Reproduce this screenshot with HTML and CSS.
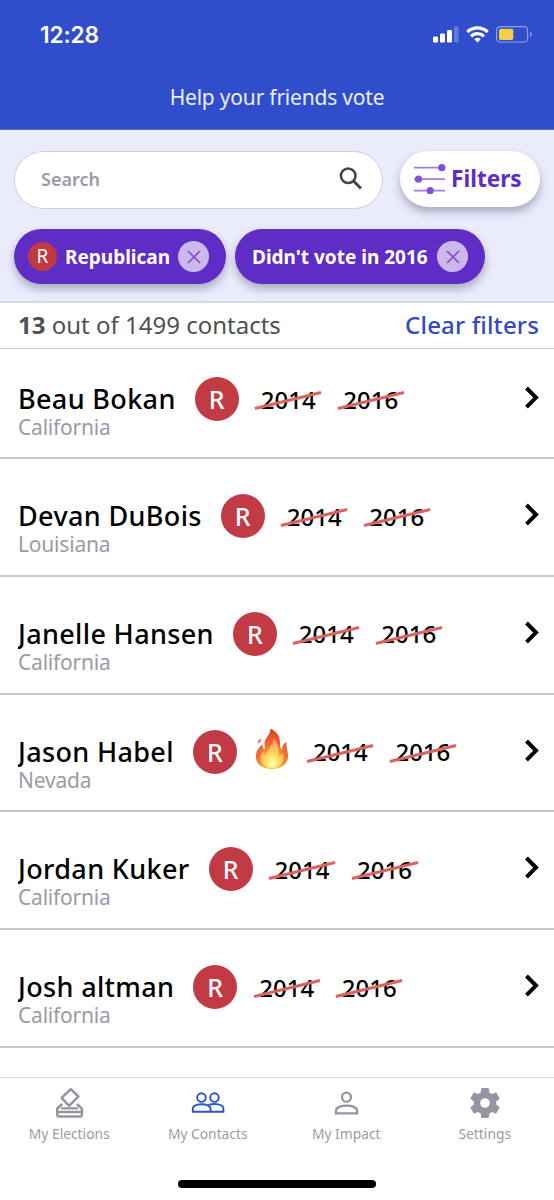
FILE: index.html
```
<!DOCTYPE html>
<html lang="en">
<head>
  <meta charset="UTF-8">
  <meta name="viewport" content="width=device-width, initial-scale=1.0">
  <title>My Contacts</title>
  <link rel="stylesheet" href="styles.css">
</head>
<body>
  <svg class="defs" width="0" height="0">
    <symbol id="chevron" viewBox="0 0 16 24">
      <path d="M2.5 2l9.5 9.6-9.5 9.6" fill="none" stroke="#000" stroke-width="4"/>
    </symbol>
    <symbol id="close" viewBox="0 0 14 14">
      <path d="M1 1l12 12M13 1L1 13" fill="none" stroke="#8450c8" stroke-width="1.7"/>
    </symbol>
  </svg>

  <div class="app">
    <header class="header">
      <div class="status-bar">
        <span class="time">12:28</span>
        <div class="status-icons">
          <svg width="26" height="17" viewBox="0 0 26 17" fill="#fff">
            <rect x="0" y="10.5" width="5" height="6" rx="1.3"/>
            <rect x="7" y="7.5" width="5" height="9" rx="1.3"/>
            <rect x="14" y="4" width="5" height="12.5" rx="1.3"/>
            <rect x="21" y="0.5" width="4.6" height="16" rx="1.3" opacity=".25"/>
          </svg>
          <svg width="23" height="17" viewBox="0 0 23 17" fill="none" stroke="#fff" stroke-width="3.2">
            <path d="M1.300 6a14.600 14.600 0 0 1 20.400 0"/>
            <path d="M5 10.300a9.300 9.300 0 0 1 13 0"/>
            <path d="M11.500 16.600l-3.200-3.400a4.800 4.800 0 0 1 6.400 0z" fill="#fff" stroke="none"/>
          </svg>
          <svg width="37" height="17" viewBox="0 0 37 17">
            <rect x="0.6" y="0.6" width="31" height="15.4" rx="3.6" fill="none" stroke="#8f9fe4" stroke-width="1.2"/>
            <rect x="3" y="2.7" width="14.3" height="11.3" rx="1.8" fill="#f8cd46"/>
            <path d="M34 5.500c2.300 1 2.300 4.600 0 5.600z" fill="#8f9fe4"/>
          </svg>
        </div>
      </div>
      <div class="title">Help your friends vote</div>
    </header>

    <section class="filter-area">
      <div class="search-row">
        <div class="search-box">
          <span>Search</span>
          <svg width="24" height="24" viewBox="0 0 24 24" fill="none" stroke="#444" stroke-width="2.500">
            <circle cx="9.200" cy="8.700" r="7.300"/>
            <path d="M14.300 13.800l7.700 7.700" stroke-width="3"/>
          </svg>
        </div>
        <div class="filters-btn">
          <svg width="36" height="30" viewBox="0 0 36 30">
            <path d="M0 3.700h29M0 15.200h31M0 26.700h31" stroke="#a57fdc" stroke-width="1.700"/>
            <circle cx="27.800" cy="3.700" r="3.600" fill="#8450d0"/>
            <circle cx="4.500" cy="15.200" r="3.600" fill="#8450d0"/>
            <circle cx="16.200" cy="26.700" r="3.600" fill="#8450d0"/>
          </svg>
          <span>Filters</span>
        </div>
      </div>
      <div class="chips">
        <div class="chip">
          <span class="chip-badge">R</span>
          <span>Republican</span>
          <span class="chip-close"><svg width="14" height="14"><use href="#close"/></svg></span>
        </div>
        <div class="chip chip-wide">
          <span>Didn't vote in 2016</span>
          <span class="chip-close"><svg width="14" height="14"><use href="#close"/></svg></span>
        </div>
      </div>
    </section>

    <div class="summary">
      <span><b>13</b> out of 1499 contacts</span>
      <a class="clear">Clear filters</a>
    </div>

    <main class="contacts">
      <div class="contact">
        <div class="contact-line">
          <span class="name">Beau Bokan</span>
          <span class="badge">R</span>
          <span class="year">2014</span>
          <span class="year">2016</span>
          <svg class="arrow" width="16" height="24"><use href="#chevron"/></svg>
        </div>
        <div class="state">California</div>
      </div>
      <div class="contact">
        <div class="contact-line">
          <span class="name">Devan DuBois</span>
          <span class="badge">R</span>
          <span class="year">2014</span>
          <span class="year">2016</span>
          <svg class="arrow" width="16" height="24"><use href="#chevron"/></svg>
        </div>
        <div class="state">Louisiana</div>
      </div>
      <div class="contact">
        <div class="contact-line">
          <span class="name">Janelle Hansen</span>
          <span class="badge">R</span>
          <span class="year">2014</span>
          <span class="year">2016</span>
          <svg class="arrow" width="16" height="24"><use href="#chevron"/></svg>
        </div>
        <div class="state">California</div>
      </div>
      <div class="contact">
        <div class="contact-line">
          <span class="name">Jason Habel</span>
          <span class="badge">R</span>
          <svg class="fire" width="34" height="42" viewBox="0 0 34 42">
            <defs>
              <radialGradient id="flame" cx=".5" cy=".85" r=".75">
                <stop offset="0" stop-color="#fff06a"/>
                <stop offset=".35" stop-color="#ffae3c"/>
                <stop offset=".62" stop-color="#f56a32"/>
                <stop offset="1" stop-color="#e5432b"/>
              </radialGradient>
              <radialGradient id="core" cx=".5" cy=".85" r=".8">
                <stop offset="0" stop-color="#fffdc0"/>
                <stop offset=".35" stop-color="#ffe35c"/>
                <stop offset=".7" stop-color="#fdb963"/>
                <stop offset="1" stop-color="#f99050"/>
              </radialGradient>
            </defs>
            <path d="M15.500 0.500c0 6.500-5.700 9.500-6 14.800-.1 2.300.8 4 .3 6-1.700-.6-2.400-2.600-2.300-5C3.500 19.500 1 23.500 1 28.800 1 36 7.500 41 16.700 41 26.300 41 33 35.800 33 27.500c0-4.300-2-7.800-1.700-13.200-2.800.9-4.100 4.100-4.300 7.200-1.500-1-2.300-2.800-2-5.300C25.500 9.200 22 3.500 15.500.5z" fill="url(#flame)"/>
            <path d="M3.500 15.500c-1.300-1.500-.4-3.800 2.300-5.300.1 1.800 0 4-2.300 5.300z" fill="#ee6a40"/>
            <path d="M18 10c1 7.500-5.500 10-6.500 17-1.700-.5-3-1.800-3.500-3.500-3.500 5.500-3.500 16 8.700 16.500 11.500-.3 12.800-8.500 11-15-1 2-2.200 2.700-4 3C24.500 21.500 23.500 14.500 18 10z" fill="url(#core)"/>
          </svg>
          <span class="year">2014</span>
          <span class="year">2016</span>
          <svg class="arrow" width="16" height="24"><use href="#chevron"/></svg>
        </div>
        <div class="state">Nevada</div>
      </div>
      <div class="contact">
        <div class="contact-line">
          <span class="name">Jordan Kuker</span>
          <span class="badge">R</span>
          <span class="year">2014</span>
          <span class="year">2016</span>
          <svg class="arrow" width="16" height="24"><use href="#chevron"/></svg>
        </div>
        <div class="state">California</div>
      </div>
      <div class="contact">
        <div class="contact-line">
          <span class="name">Josh altman</span>
          <span class="badge">R</span>
          <span class="year">2014</span>
          <span class="year">2016</span>
          <svg class="arrow" width="16" height="24"><use href="#chevron"/></svg>
        </div>
        <div class="state">California</div>
      </div>
    </main>

    <nav class="tabs">
      <div class="tab">
        <svg width="36" height="36" viewBox="0 0 36 36" fill="none" stroke="#9395a0" stroke-width="2.500" stroke-linejoin="round">
          <path d="M19.800 4.200l7.600 7.300-9.300 9.300-7.500-8z"/>
          <path d="M11.200 19l-5 4.700v6.100q0 1.800 1.800 1.800h21.100q1.800 0 1.800-1.800v-6.100l-5-4.700M6.200 27h24.700" stroke-width="2.500"/>
          <path d="M10 23.300h17" stroke-width="2.200"/>
        </svg>
        <span>My Elections</span>
      </div>
      <div class="tab">
        <svg width="36" height="36" viewBox="0 0 36 36" fill="none" stroke="#3150cc" stroke-width="1.900">
          <circle cx="11.500" cy="12.600" r="4.300"/>
          <circle cx="24.500" cy="12.600" r="4.300"/>
          <path d="M2.800 26.800v-3c0-6 17.800-6 17.800 0v3zM17 20.700c4.500-2.800 16.400-2.400 16.400 3.100v3H20.500"/>
        </svg>
        <span>My Contacts</span>
      </div>
      <div class="tab">
        <svg width="36" height="36" viewBox="0 0 36 36" fill="none" stroke="#9395a0" stroke-width="2.300">
          <circle cx="18.500" cy="12.200" r="4.500"/>
          <path d="M8 28.400v-3c0-6.300 21-6.300 21 0v3z"/>
        </svg>
        <span>My Impact</span>
      </div>
      <div class="tab">
        <svg width="36" height="36" viewBox="0 0 24 24" fill="#9395a3">
          <path d="M19.430 12.980c.04-.32.070-.64.070-.98s-.03-.66-.07-.98l2.110-1.650c.19-.15.24-.42.120-.64l-2-3.460c-.12-.22-.39-.3-.61-.22l-2.490 1c-.52-.4-1.080-.73-1.690-.98l-.38-2.650C14.460 2.180 14.250 2 14 2h-4c-.25 0-.46.180-.49.420l-.38 2.650c-.61.25-1.170.59-1.690.98l-2.490-1c-.23-.09-.49 0-.61.220l-2 3.460c-.13.220-.07.490.120.640l2.110 1.650c-.04.320-.07.650-.07.980s.03.660.070.980l-2.110 1.650c-.19.150-.24.420-.12.640l2 3.460c.12.220.39.300.61.220l2.490-1c.52.400 1.080.730 1.690.980l.38 2.650c.03.240.240.420.490.420h4c.25 0 .46-.18.490-.42l.38-2.650c.61-.25 1.170-.59 1.690-.98l2.490 1c.23.090.49 0 .61-.22l2-3.460c.12-.22.070-.49-.12-.64l-2.110-1.650zM12 15.200c-1.770 0-3.200-1.430-3.200-3.200s1.430-3.200 3.200-3.200 3.200 1.430 3.200 3.200-1.430 3.200-3.200 3.200z"/>
        </svg>
        <span>Settings</span>
      </div>
    </nav>
    <div class="home-bar"></div>
  </div>
</body>
</html>
```

FILE: styles.css
```
* { box-sizing: border-box; }
body { margin: 0; font-family: "Noto Sans", "Open Sans", sans-serif; background: #fff; }
.defs { display: block; }
.app { width: 554px; height: 1200px; overflow: hidden; display: flex; flex-direction: column; }
.app > * { flex-shrink: 0; }
svg { display: block; flex-shrink: 0; }
span, a { white-space: nowrap; flex-shrink: 0; }

/* header */
.header { height: 130px; background: #304ecb; color: #fff; border-bottom: 1px solid #5268d0; }
.status-bar { height: 68px; padding: 0 21px 0 40px; display: flex; justify-content: space-between; align-items: center; }
.time { font-family: Inter, sans-serif; font-size: 22.6px; font-weight: 600; letter-spacing: -0.1px; }
.status-icons { display: flex; gap: 7px; }
.title { text-align: center; font-size: 21px; line-height: 59px; letter-spacing: -0.2px; color: #e9efff; }

/* search and filters */
.filter-area { height: 173px; padding: 21px 14px 0; background: #eaebfb; border-bottom: 2px solid #d8d9e3; }
.search-row { display: flex; justify-content: space-between; align-items: flex-start; }
.search-box { width: 369px; height: 58px; padding: 0 19px 2px 26px; display: flex; justify-content: space-between; align-items: center; background: #fff; border: 1px solid #cfcfd6; border-radius: 29px; }
.search-box span { font-size: 18px; font-weight: 600; color: #9a9ba7; }
.filters-btn { width: 140px; height: 56px; padding-left: 14px; display: flex; align-items: center; gap: 1px; background: #fff; border-radius: 28px; box-shadow: 0 5px 9px rgba(50,50,80,0.35); }
.filters-btn span { font-size: 22.6px; line-height: 56px; font-weight: 700; color: #5d2bc5; }
.chips { display: flex; gap: 9px; margin-top: 20px; }
.chip { width: 212px; height: 55px; padding: 0 17px 0 14px; display: flex; align-items: center; justify-content: space-between; background: #5f2dc6; border-radius: 28px; box-shadow: 0 5px 8px rgba(50,50,80,0.35); color: #fff; font-size: 19px; font-weight: 700; }
.chip-wide { width: 250px; padding-left: 17px; }
.chip-badge { width: 29px; height: 29px; border-radius: 50%; background: #c13a42; font-weight: 400; line-height: 29px; text-align: center; }
.chip-close { width: 31px; height: 31px; border-radius: 50%; background: #ccb8ec; display: flex; align-items: center; justify-content: center; }

.summary { height: 46px; padding: 0 15px 3px 18px; display: flex; justify-content: space-between; align-items: center; border-bottom: 1px solid #cfcfcf; color: #505050; font-size: 24px; }
.clear { color: #3349c6; font-weight: 500; letter-spacing: 0.15px; }

/* contact list */
.contacts { height: 728px; overflow: hidden; }
.contact { height: 117.8px; padding: 35px 14px 0 18px; border-bottom: 2px solid #c8c8c8; }
.contact:first-child { height: 110px; padding-top: 28px; }
.contact-line { height: 44px; display: flex; align-items: center; }
.name { font-size: 27px; font-weight: 500; line-height: 32px; letter-spacing: 0.35px; color: #000; clip-path: inset(0 0 -6px 0); }
.badge { width: 44px; height: 44px; margin-left: 19px; border-radius: 50%; background: #c13a44; color: #fff; font-size: 25px; font-weight: 500; line-height: 44px; text-align: center; }
.fire { margin: -6px 2px 0 18px; }
.year { position: relative; width: 66px; margin-left: 16.5px; color: #000; font-size: 24px; font-weight: 500; text-align: center; }
.year::after { content: ""; position: absolute; left: -1px; top: 50%; width: 68px; height: 3px; background: #dd6360; transform: rotate(-13.5deg); }
.arrow { margin: -2px 0 0 auto; }
.state { margin-top: -8px; font-size: 21px; font-weight: 400; line-height: 28px; letter-spacing: -0.2px; color: #9a9ba7; }

/* bottom navigation */
.tabs { height: 84px; display: grid; grid-template-columns: repeat(4, 1fr); border-top: 1px solid #d4d4d4; }
.tab { height: 67px; display: flex; flex-direction: column; align-items: center; justify-content: space-between; padding-top: 7px; color: #9a9ba7; font-size: 13.8px; }
.tab span { line-height: 22px; }
.home-bar { width: 198px; height: 8px; margin: 19px auto 0; border-radius: 4px; background: #000; }
```
